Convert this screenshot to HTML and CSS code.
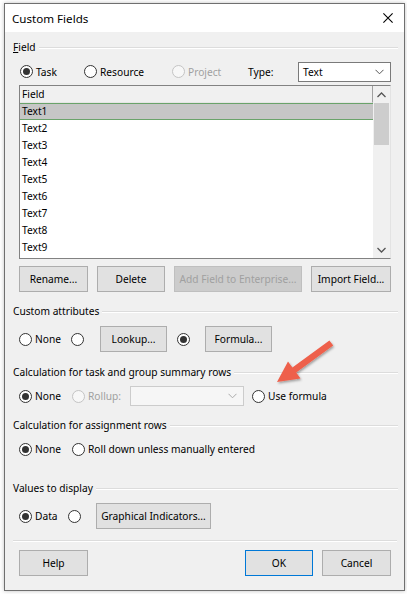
FILE: index.html
```html
<!DOCTYPE html>
<html>
<head>
<meta charset="utf-8">
<link rel="stylesheet" href="styles.css">
</head>
<body>
<div class="desk">
  <div class="dialog">
    <div class="titlebar">
      <span class="title">Custom Fields</span>
      <svg class="close" width="10" height="10" viewBox="0 0 10 10"><path d="M0.4 0.4 L9.6 9.6 M9.6 0.4 L0.4 9.6" stroke="#000" stroke-width="1.1" fill="none"/></svg>
    </div>
    <div class="content">
      <div class="group-head"><span class="gh-text"><u>F</u>ield</span><i class="rule"></i></div>
      <div class="inner row type-row">
        <label class="opt w-task"><span class="radio on"></span>Task</label>
        <label class="opt w-res"><span class="radio"></span>Resource</label>
        <label class="opt w-proj disabled"><span class="radio dis"></span>Project</label>
        <span class="type-label">Type:</span>
        <div class="combo type-combo"><span>Text</span><svg width="9" height="6" viewBox="0 0 9 6"><path d="M0.5 0.8 L4.5 4.8 L8.5 0.8" stroke="#555" fill="none"/></svg></div>
      </div>
      <div class="inner listbox">
        <div class="list-main">
          <div class="list-header">Field</div>
          <div class="item selected">Text1</div>
          <div class="item">Text2</div>
          <div class="item">Text3</div>
          <div class="item">Text4</div>
          <div class="item">Text5</div>
          <div class="item">Text6</div>
          <div class="item">Text7</div>
          <div class="item">Text8</div>
          <div class="item">Text9</div>
        </div>
        <div class="scrollbar">
          <div class="sb-arrow"><svg width="9" height="6" viewBox="0 0 9 6"><path d="M0.5 5 L4.5 1 L8.5 5" stroke="#555" stroke-width="1.3" fill="none"/></svg></div>
          <div class="sb-thumb"></div>
          <div class="sb-track"></div>
          <div class="sb-arrow"><svg width="9" height="6" viewBox="0 0 9 6"><path d="M0.5 1 L4.5 5 L8.5 1" stroke="#555" stroke-width="1.3" fill="none"/></svg></div>
        </div>
      </div>
      <div class="inner btn-row">
        <button class="btn b-rename">Rename...</button>
        <button class="btn b-delete">Delete</button>
        <button class="btn b-add" disabled>Add Field to Enterprise...</button>
        <button class="btn b-import">Import Field...</button>
      </div>

      <div class="group-head gh-attr"><span class="gh-text">Custom attributes</span><i class="rule"></i></div>
      <div class="inner row attr-row">
        <label class="opt w-none"><span class="radio"></span>None</label>
        <span class="radio lone"></span>
        <button class="btn b-lookup">Lookup...</button>
        <span class="radio on lone2"></span>
        <button class="btn b-formula">Formula...</button>
      </div>

      <div class="group-head gh-calc"><span class="gh-text">Calculation for task and group summary rows</span><i class="rule"></i></div>
      <div class="inner row calc-row">
        <label class="opt w-none2"><span class="radio on"></span>None</label>
        <label class="opt w-roll disabled"><span class="radio dis"></span>Rollup:</label>
        <div class="combo roll-combo dis"><span></span><svg width="9" height="6" viewBox="0 0 9 6"><path d="M0.5 0.8 L4.5 4.8 L8.5 0.8" stroke="#aaa" fill="none"/></svg></div>
        <label class="opt w-use"><span class="radio"></span>Use formula</label>
      </div>

      <div class="group-head gh-assign"><span class="gh-text">Calculation for assignment rows</span><i class="rule"></i></div>
      <div class="inner row assign-row">
        <label class="opt w-none2"><span class="radio on"></span>None</label>
        <label class="opt"><span class="radio"></span>Roll down unless manually entered</label>
      </div>

      <div class="group-head gh-values"><span class="gh-text">Values to display</span><i class="rule"></i></div>
      <div class="inner row values-row">
        <label class="opt w-data"><span class="radio on"></span>Data</label>
        <span class="radio lone3"></span>
        <button class="btn b-graph">Graphical Indicators...</button>
      </div>

      <div class="sep"></div>
      <div class="inner btn-row bottom-row">
        <button class="btn b-help">Help</button>
        <span class="spacer"></span>
        <button class="btn b-ok default">OK</button>
        <button class="btn b-cancel">Cancel</button>
      </div>
    </div>
    <svg class="arrow" width="400" height="600" viewBox="0 0 400 600">
      <defs>
        <filter id="sh" x="-20%" y="-20%" width="140%" height="140%">
          <feDropShadow dx="1" dy="1.5" stdDeviation="1.2" flood-color="#000" flood-opacity="0.35"/>
        </filter>
      </defs>
      <polygon filter="url(#sh)" fill="#ee604b" points="272,378 283,357.5 287.4,363.4 324.4,336.4 328.2,341.6 291.2,368.6 295.5,374.5"/>
    </svg>
  </div>
</div>
</body>
</html>
```

FILE: styles.css
```css
* { box-sizing: border-box; }
html, body { margin: 0; padding: 0; }
body {
  width: 407px;
  height: 594px;
  overflow: hidden;
  background: #ffffff;
  font-family: "Noto Sans", "Open Sans", sans-serif;
  font-size: 10.2px;
  color: #1b1b1b;
}
.desk {
  padding: 3px 0 0 4px;
  background: #ffffff;
}
.dialog {
  position: relative;
  width: 401px;
  height: 588px;
  border: 1px solid #6f6f6f;
  background: #f0f0f0;
  box-shadow: 0 0 4px rgba(0,0,0,0.25);
}
.titlebar {
  height: 28px;
  background: #ffffff;
  display: flex;
  align-items: center;
  justify-content: space-between;
  padding: 0 11px 0 7px;
}
.title {
  font-size: 11.6px;
  color: #000;
}
.close { display: block; }

.content {
  padding: 7px 6px 0 8px;
}
.group-head {
  height: 16px;
  display: flex;
  align-items: center;
  gap: 3px;
}
.gh-text { white-space: nowrap; color: #000; }
.rule {
  flex: 1;
  height: 0;
  border-top: 1px solid #dcdcdc;
  border-bottom: 1px solid #ffffff;
  margin-top: 1px;
}
.inner {
  margin-left: 6px;
  margin-right: 7px;
}
.row {
  display: flex;
  align-items: center;
}
.opt {
  display: flex;
  align-items: center;
  gap: 3px;
  white-space: nowrap;
  color: #000;
}
.opt.disabled { color: #a0a0a0; }
.radio {
  display: inline-block;
  width: 13px;
  height: 13px;
  border: 1px solid #333;
  border-radius: 50%;
  background: #fff;
  position: relative;
  flex: none;
}
.radio.on::after {
  content: "";
  position: absolute;
  left: 2px; top: 2px;
  width: 7px; height: 7px;
  border-radius: 50%;
  background: #333;
}
.radio.dis { border-color: #c4c4c4; background: #f7f7f7; }

.type-row { margin-top: 6px; height: 21px; padding-left: 1px; }
.w-task { width: 64px; }
.w-res { width: 88px; }
.w-proj { width: 76px; }
.type-label { width: 50px; color: #000; }
.combo {
  height: 20px;
  border: 1px solid #7a7a7a;
  background: #fff;
  display: flex;
  align-items: center;
  justify-content: space-between;
  padding: 0 6px 0 4px;
  color: #000;
}
.type-combo { flex: 1; margin-left: 0; }

.listbox {
  margin-top: 3px;
  height: 174px;
  border: 1px solid #828282;
  border-right-color: #e3e3e3;
  background: #fff;
  display: flex;
}
.list-main { flex: 1; }
.list-header {
  height: 17px;
  line-height: 17px;
  padding-left: 2px;
  background: #f0f0f0;
  border-bottom: 1px solid #e5e5e5;
  border-right: 1px solid #a0a0a0;
  color: #000;
}
.item {
  height: 17px;
  line-height: 17px;
  padding-left: 2px;
  color: #000;
}
.item.selected {
  background: #c6c6c6;
  border-top: 1px solid #6aa36a;
  border-bottom: 1px solid #6aa36a;
  line-height: 15px;
}
.scrollbar {
  width: 17px;
  background: #f0f0f0;
  display: flex;
  flex-direction: column;
}
.sb-arrow {
  height: 17px;
  display: flex;
  align-items: center;
  justify-content: center;
}
.sb-thumb {
  height: 42px;
  margin: 0 1px;
  background: #cdcdcd;
}
.sb-track { flex: 1; }

.btn {
  font: inherit;
  color: #000;
  height: 26px;
  background: #e1e1e1;
  border: 1px solid #adadad;
  padding: 0;
  white-space: nowrap;
}
.btn:disabled {
  background: #cccccc;
  border-color: #bfbfbf;
  color: #a0a0a0;
}
.btn.default { border-color: #0078d7; }
.btn-row {
  margin-top: 7px;
  display: flex;
  gap: 9px;
}
.b-rename { width: 69px; }
.b-delete { width: 68px; }
.b-add { width: 128px; }
.b-import { flex: 1; }

.gh-attr { margin-top: 11px; }
.attr-row { margin-top: 7px; height: 26px; }
.w-none { width: 52px; }
.lone { margin-right: 16px; }
.b-lookup { width: 67px; margin-right: 10px; }
.lone2 { margin-right: 15px; }
.b-formula { width: 67px; }

.gh-calc { margin-top: 12px; }
.calc-row { margin-top: 6px; height: 20px; }
.w-none2 { width: 53px; }
.w-roll { width: 58px; }
.roll-combo { width: 114px; border-color: #cccccc; background: #f6f6f6; margin-right: 8px; }

.gh-assign { margin-top: 11px; }
.assign-row { margin-top: 8px; height: 16px; }

.gh-values { margin-top: 23px; }
.values-row { margin-top: 7px; height: 26px; }
.w-data { width: 49px; }
.lone3 { margin-right: 15px; }
.b-graph { width: 115px; }

.sep {
  margin-top: 11px;
  margin-right: 1px;
  border-top: 1px solid #dcdcdc;
  border-bottom: 1px solid #ffffff;
}
.bottom-row { margin-top: 8px; }
.spacer { flex: 1; }
.b-help { width: 69px; }
.b-ok { width: 68px; }
.b-cancel { width: 69px; }

.arrow {
  position: absolute;
  left: 0;
  top: 0;
  pointer-events: none;
}
```
